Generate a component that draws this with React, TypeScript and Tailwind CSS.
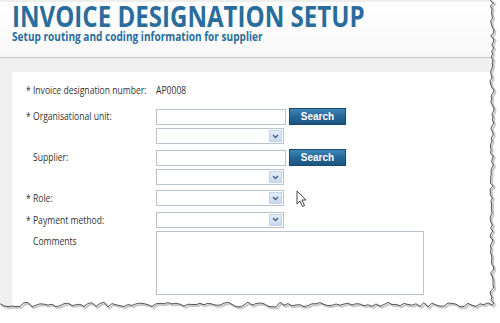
import React from 'react';

const squeeze = 'inline-block origin-left scale-x-[0.78] whitespace-nowrap';

function Label({ text, indent }: { text: string; indent?: boolean }) {
  return (
    <div className={`w-[130px] shrink-0 text-[11px] text-[#333] ${indent ? 'pl-[7px]' : ''}`}>
      <span className={squeeze}>{text}</span>
    </div>
  );
}

function TextBox() {
  return <div className="w-[130px] h-[16px] border border-[#b9c3cf] bg-white" />;
}

function SelectBox() {
  return (
    <div className="w-[128px] h-[16px] border border-[#b9c3cf] bg-white flex justify-end items-center pr-[1px]">
      <div className="w-[13px] h-[12px] bg-gradient-to-b from-[#e4ecf8] to-[#c9d8f0] border border-[#c5d3ea] flex items-center justify-center">
        <svg width="7" height="5" viewBox="0 0 7 5">
          <path d="M1 1 L3.5 3.5 L6 1" fill="none" stroke="#4a5d80" strokeWidth="1.3" />
        </svg>
      </div>
    </div>
  );
}

function SearchButton() {
  return (
    <button className="ml-[3px] w-[57px] h-[17px] bg-gradient-to-b from-[#3f86b8] via-[#276797] to-[#1b557f] border border-[#18496c] text-white text-[10px] font-bold leading-none font-['Liberation_Sans',sans-serif] flex items-center justify-center">
      Search
    </button>
  );
}

function rand(i: number) {
  const x = Math.sin(i * 12.9898) * 43758.5453;
  return x - Math.floor(x);
}

function TornEdge() {
  const right: string[] = [];
  for (let y = 0, i = 0; y <= 304; y += 3, i++) {
    right.push(`${490 + rand(i) * 4},${y}`);
  }
  const bottom: string[] = [];
  for (let x = 492, i = 200; x >= 0; x -= 4, i++) {
    bottom.push(`${x},${302 + rand(i) * 5}`);
  }
  const edge = [...right, ...bottom].join(' ');
  const outside = `${edge} 0,323 500,323 500,0`;
  return (
    <svg className="absolute inset-0" width="500" height="323">
      <polygon points={outside} fill="#ffffff" />
      <polyline points={edge} fill="none" stroke="#c8c8c8" strokeWidth="2" transform="translate(1.5,1.5)" />
      <polyline points={edge} fill="none" stroke="#444" strokeWidth="0.9" />
    </svg>
  );
}

export default function App() {
  return (
    <div className="relative w-[500px] h-[323px] bg-white overflow-hidden font-['Open_Sans',sans-serif]">
      <div className="w-[494px] h-[312px] flex flex-col">
        <header className="h-[58px] shrink-0 border-b border-[#c4c4c4] bg-gradient-to-b from-white to-[#f8f8f8] pl-3 border-t-2 border-t-[#eeeeee]">
          <h1 className="h-[28px] text-[28px] font-bold leading-none text-[#2a6d9c]">
            <span className="inline-block origin-left scale-x-[0.86] whitespace-nowrap">INVOICE DESIGNATION SETUP</span>
          </h1>
          <p className="h-[12px] text-[12px] font-bold leading-none text-[#2a6d9c] mt-[1px]">
            <span className="inline-block origin-left scale-x-[0.84] whitespace-nowrap">Setup routing and coding information for supplier</span>
          </p>
        </header>
        <div className="flex-1 bg-[#f0f0f0] pl-3 pt-[14px]">
          <div className="h-full bg-white pl-[14px] pt-[10px] flex flex-col">
            <div className="flex items-center h-[16px]">
              <Label text="* Invoice designation number:" />
              <span className={`${squeeze} text-[11px] text-[#333]`}>AP0008</span>
            </div>
            <div className="flex items-center h-[17px] mt-[10px]">
              <Label text="* Organisational unit:" />
              <TextBox />
              <SearchButton />
            </div>
            <div className="flex items-center mt-[3px]">
              <div className="w-[130px]" />
              <SelectBox />
            </div>
            <div className="flex items-center h-[17px] mt-[5px]">
              <Label text="Supplier:" indent />
              <TextBox />
              <SearchButton />
            </div>
            <div className="flex items-center mt-[3px]">
              <div className="w-[130px]" />
              <SelectBox />
            </div>
            <div className="flex items-center mt-[5px]">
              <Label text="* Role:" />
              <SelectBox />
            </div>
            <div className="flex items-center mt-[5px]">
              <Label text="* Payment method:" />
              <SelectBox />
            </div>
            <div className="flex items-start mt-[3px]">
              <div className="pt-[2px]">
                <Label text="Comments" indent />
              </div>
              <div className="w-[268px] h-[64px] border border-[#b9c3cf] bg-white" />
            </div>
          </div>
        </div>
      </div>
      <TornEdge />
      <svg className="absolute left-[296px] top-[190px]" width="12" height="18" viewBox="0 0 12 18">
        <path d="M1 1 L1 14 L4 11 L6.5 16.5 L8.5 15.5 L6 10 L10 10 Z" fill="#fff" stroke="#333" strokeWidth="0.9" strokeLinejoin="round" />
      </svg>
    </div>
  );
}
